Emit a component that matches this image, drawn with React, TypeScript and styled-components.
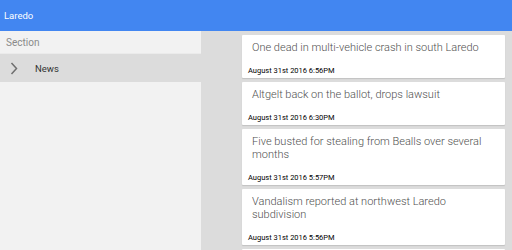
import React from 'react';
import styled, { createGlobalStyle } from 'styled-components';

type Story = {
  title: string;
  date: string;
};

const stories: Story[] = [
  { title: 'One dead in multi-vehicle crash in south Laredo', date: 'August 31st 2016 6:56PM' },
  { title: 'Altgelt back on the ballot, drops lawsuit', date: 'August 31st 2016 6:30PM' },
  { title: 'Five busted for stealing from Bealls over several months', date: 'August 31st 2016 5:57PM' },
  { title: 'Vandalism reported at northwest Laredo subdivision', date: 'August 31st 2016 5:56PM' },
];

function App() {
  return (
    <>
      <GlobalStyle />
      <Screen>
        <AppBar>Laredo</AppBar>
        <Body>
          <Sidebar>
            <SectionLabel>Section</SectionLabel>
            <NavItem>
              <svg width="8" height="13" viewBox="0 0 8 13">
                <polyline points="1.5,1 6.5,6.5 1.5,12" fill="none" stroke="#6f6f6f" strokeWidth="1.5" />
              </svg>
              <NavText>News</NavText>
            </NavItem>
          </Sidebar>
          <Feed>
            {stories.map((story) => (
              <Card key={story.title}>
                <CardTitle>{story.title}</CardTitle>
                <CardDate>{story.date}</CardDate>
              </Card>
            ))}
            {/* next card peeking in below the fold */}
            <Card />
          </Feed>
        </Body>
      </Screen>
    </>
  );
}

const GlobalStyle = createGlobalStyle`
  html, body {
    margin: 0;
    padding: 0;
    overflow: hidden;
  }
  body {
    font-family: Roboto, "Liberation Sans", sans-serif;
  }
`;

const Screen = styled.div`
  width: 512px;
  height: 250px;
  display: flex;
  flex-direction: column;
  overflow: hidden;
`;

const AppBar = styled.div`
  height: 31px;
  flex-shrink: 0;
  background: #4286f1;
  color: #fff;
  font-size: 9.5px;
  font-weight: 400;
  display: flex;
  align-items: center;
  padding-left: 4px;
`;

const Body = styled.div`
  flex: 1;
  display: flex;
  min-height: 0;
`;

const Sidebar = styled.div`
  width: 201px;
  flex-shrink: 0;
  background: #f2f2f2;
`;

const SectionLabel = styled.div`
  height: 23px;
  display: flex;
  align-items: center;
  padding-left: 6px;
  font-size: 10px;
  color: #8a8a8a;
  box-sizing: border-box;
  border-bottom: 1px solid #ebebeb;
`;

const NavItem = styled.div`
  height: 28px;
  background: #dcdcdc;
  display: flex;
  align-items: center;
  padding-left: 10px;

  svg {
    flex-shrink: 0;
  }
`;

const NavText = styled.span`
  margin-left: 17px;
  font-size: 9.5px;
  color: #333;
`;

const Feed = styled.div`
  flex: 1;
  background: #dcdcdc;
  padding: 4px 7px 0 41px;
  display: flex;
  flex-direction: column;
  gap: 4px;
  overflow: hidden;
`;

const Card = styled.div`
  background: #fff;
  border-radius: 1px;
  box-shadow: 0 1px 1px rgba(0, 0, 0, 0.12);
  padding: 6px 10px 3px 10px;
  flex-shrink: 0;
  min-height: 34px;
`;

const CardTitle = styled.div`
  font-size: 11px;
  line-height: 13px;
  font-weight: 300;
  color: #4f4f4f;
  margin-bottom: 12px;
`;

const CardDate = styled.div`
  font-size: 7.5px;
  line-height: 9px;
  font-weight: 400;
  color: #000;
  margin-left: -4px;
`;

export default App;
